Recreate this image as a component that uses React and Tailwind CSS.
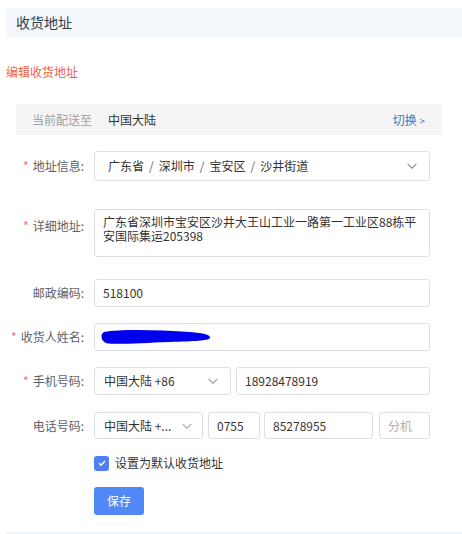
import React from "react";

const font = { fontFamily: '"Noto Sans CJK SC", "Noto Sans", sans-serif' };

function Chevron({ className = "" }) {
  return (
    <svg viewBox="0 0 16 16" className={className} fill="none" stroke="currentColor" strokeWidth="1.2">
      <path d="M3 5.5 L8 10.5 L13 5.5" />
    </svg>
  );
}

function Label({ req, children, top }) {
  return (
    <div className={`w-[78px] shrink-0 text-right text-[12px] text-[#606266] ${top ? "pt-[8px]" : ""}`}>
      {req && <span className="text-[#f56c6c] mr-[4px]">*</span>}
      {children}
    </div>
  );
}

export default function App() {
  return (
    <div className="w-[462px] h-[534px] bg-white overflow-hidden text-[12px]" style={font}>
      <div className="pl-[6px] pt-[8px]">
        <div className="h-[29px] bg-[#f4f8fd] flex items-center pl-[10px] text-[14px] text-[#2c3e50]">收货地址</div>
        <div className="mt-[26px] text-[12px] text-[#f0623f] leading-[18px]">编辑收货地址</div>

        <div className="ml-[10px] mr-[20px] mt-[23px] h-[31px] bg-[#f5f5f5] flex items-center pl-[16px] pr-[17px]">
          <span className="text-[#a0a0a0]">当前配送至</span>
          <span className="ml-[16px] text-[#333]">中国大陆</span>
          <span className="ml-auto text-[#3a78c4]">切换 <span className="text-[10px]">&gt;</span></span>
        </div>

        <div className="pr-[32px]">
          <div className="flex items-center mt-[16px]">
            <Label req>地址信息:</Label>
            <div className="ml-[10px] flex-1 h-[30px] border border-[#dcdfe6] rounded-[3px] flex items-center pl-[13px] pr-[10px] text-[#333]">
              <span>广东省</span>
              <span className="mx-[5px] text-[#666]">/</span>
              <span>深圳市</span>
              <span className="mx-[5px] text-[#666]">/</span>
              <span>宝安区</span>
              <span className="mx-[5px] text-[#666]">/</span>
              <span>沙井街道</span>
              <Chevron className="ml-auto w-[14px] h-[14px] text-[#888]" />
            </div>
          </div>

          <div className="flex items-start mt-[28px]">
            <Label req top>详细地址:</Label>
            <div className="ml-[10px] flex-1 h-[48px] border border-[#dcdfe6] rounded-[3px] pl-[8px] pr-[8px] pt-[5px] text-[#333] leading-[14px]">
              广东省深圳市宝安区沙井大王山工业一路第一工业区88栋平安国际集运205398
            </div>
          </div>

          <div className="flex items-center mt-[22px]">
            <Label>邮政编码:</Label>
            <div className="ml-[10px] flex-1 h-[28px] border border-[#dcdfe6] rounded-[3px] flex items-center pl-[8px] text-[#333]">518100</div>
          </div>

          <div className="flex items-center mt-[16px]">
            <Label req>收货人姓名:</Label>
            <div className="ml-[10px] flex-1 h-[28px] border border-[#dcdfe6] rounded-[3px] flex items-center pl-[5px]">
              <svg width="112" height="18" viewBox="0 0 112 18">
                <path d="M4 4 C 20 1, 60 2, 90 4 C 104 5, 111 7, 110 10 C 108 13, 95 13, 70 14 C 40 15, 15 17, 6 15 C 1 13, 0 6, 4 4 Z" fill="#0000ee" />
              </svg>
            </div>
          </div>

          <div className="flex items-center mt-[16px]">
            <Label req>手机号码:</Label>
            <div className="ml-[10px] w-[137px] h-[28px] border border-[#dcdfe6] rounded-[3px] flex items-center pl-[9px] pr-[10px] text-[#333]">
              <span>中国大陆 +86</span>
              <Chevron className="ml-auto w-[14px] h-[14px] text-[#999]" />
            </div>
            <div className="ml-[5px] flex-1 h-[28px] border border-[#dcdfe6] rounded-[3px] flex items-center pl-[8px] text-[#333]">18928478919</div>
          </div>

          <div className="flex items-center mt-[17px]">
            <Label>电话号码:</Label>
            <div className="ml-[10px] w-[109px] h-[27px] border border-[#dcdfe6] rounded-[3px] flex items-center pl-[9px] pr-[8px] text-[#333]">
              <span>中国大陆 +...</span>
              <Chevron className="ml-auto w-[14px] h-[14px] text-[#aaa]" />
            </div>
            <div className="ml-[5px] w-[52px] h-[27px] border border-[#dcdfe6] rounded-[3px] flex items-center pl-[8px] text-[#333]">0755</div>
            <div className="ml-[4px] w-[109px] h-[27px] border border-[#dcdfe6] rounded-[3px] flex items-center pl-[8px] text-[#333]">85278955</div>
            <div className="ml-[6px] flex-1 h-[27px] border border-[#dcdfe6] rounded-[3px] flex items-center pl-[8px] text-[#b0b0b0]">分机</div>
          </div>

          <div className="flex items-center mt-[15px] ml-[88px]">
            <div className="w-[15px] h-[15px] rounded-[3px] bg-[#4f7ff0] flex items-center justify-center">
              <svg viewBox="0 0 12 12" className="w-[10px] h-[10px]" fill="none" stroke="white" strokeWidth="1.8">
                <path d="M2.5 6.2 L5 8.6 L9.6 3.6" />
              </svg>
            </div>
            <span className="ml-[6px] text-[#333]">设置为默认收货地址</span>
          </div>

          <div className="ml-[88px] mt-[15px]">
            <div className="w-[50px] h-[28px] rounded-[3px] bg-[#5288f5] text-white flex items-center justify-center text-[12px]">保存</div>
          </div>
        </div>

        <div className="mt-[17px] h-[10px] bg-[#eef6fb]"></div>
      </div>
    </div>
  );
}
